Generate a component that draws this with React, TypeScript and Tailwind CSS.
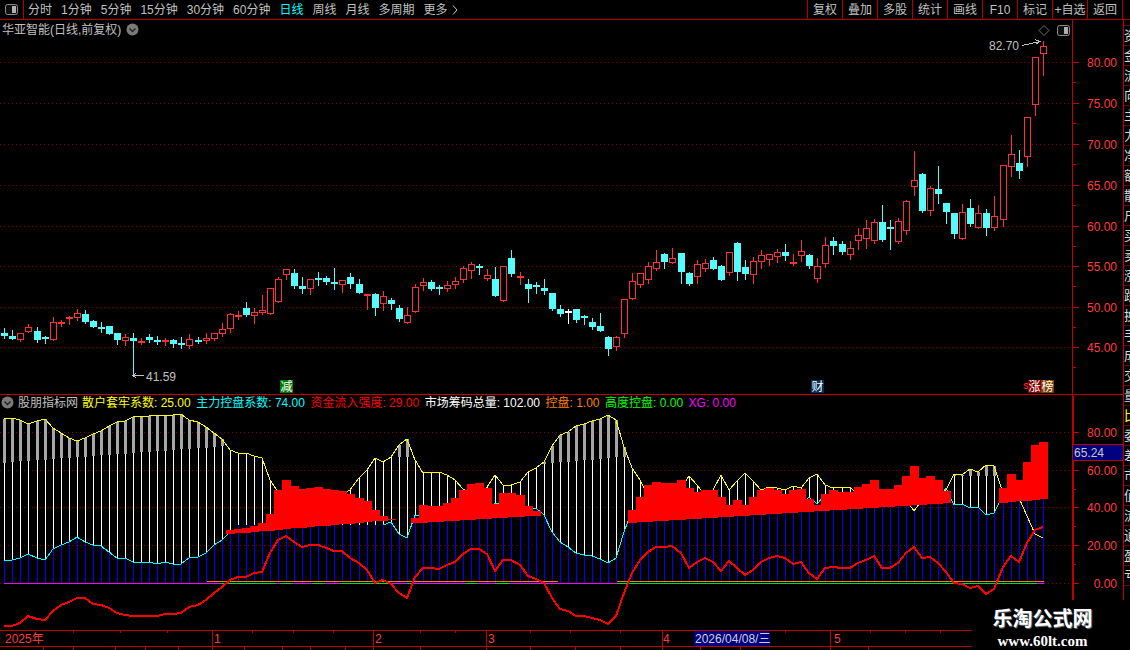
const CANDLES: number[][] = [
  [1,328,333,336,338],[1,330,336,339,339],[0,333,333,340,341],[0,324,327,332,332],[1,327,331,340,342],
  [1,336,337,339,343],[0,317,322,340,340],[0,320,322,323,326],[0,316,317,318,324],[0,309,313,318,320],
  [1,310,314,322,323],[1,320,321,327,327],[1,322,327,327,332],[1,326,326,334,334],[1,333,333,340,344],
  [0,334,337,341,345],[1,333,338,341,375],[0,338,341,343,344],[1,334,337,340,342],[1,336,340,342,344],
  [0,338,340,341,345],[1,339,340,344,347],[1,337,343,345,348],[0,334,339,346,348],[1,337,340,340,343],
  [0,333,338,341,343],[0,333,333,339,340],[0,323,329,334,336],[0,313,314,329,332],[0,311,315,317,319],
  [1,302,308,315,316],[0,308,312,316,323],[0,295,310,313,314],[0,288,288,314,314],[0,277,279,302,302],
  [0,269,269,275,279],[1,269,273,286,288],[1,277,286,289,293],[0,279,279,289,294],[1,272,278,278,285],
  [1,276,278,282,284],[1,268,282,284,289],[0,280,280,285,292],[1,273,277,284,288],[1,279,284,293,293],
  [0,294,294,296,309],[1,293,294,308,315],[0,291,296,304,310],[1,298,300,304,309],[1,305,308,319,321],
  [0,307,315,323,323],[0,284,287,312,312],[0,278,282,286,290],[1,280,282,289,290],[1,285,287,287,294],
  [0,281,285,289,291],[0,277,281,285,288],[0,266,268,280,282],[0,262,264,271,278],[1,264,266,266,274],
  [0,269,275,279,280],[1,267,279,296,296],[0,266,266,301,301],[1,250,258,274,276],[0,272,276,278,284],
  [1,279,284,289,302],[1,282,285,287,293],[1,279,288,291,294],[1,293,293,309,310],[1,305,309,314,316],
  [2,309,311,311,323],[1,309,309,320,322],[1,315,316,316,324],[1,318,322,327,329],[1,313,326,331,331],
  [1,336,337,349,355],[0,336,337,347,350],[0,299,299,334,337],[0,273,281,299,299],[0,273,273,285,287],
  [0,262,266,280,283],[0,250,262,269,270],[1,253,254,262,268],[0,248,258,263,263],[1,253,253,272,283],
  [1,272,273,284,285],[0,260,264,277,283],[0,259,263,269,271],[1,257,260,269,269],[1,265,266,280,280],
  [0,252,252,273,275],[1,242,243,272,280],[1,260,267,274,279],[0,257,261,275,283],[0,250,255,262,268],
  [0,254,254,260,265],[0,249,252,257,262],[1,244,252,256,260],[0,254,262,262,265],[0,240,251,256,261],
  [1,254,255,266,268],[0,258,266,279,282],[0,237,245,264,267],[1,237,241,246,254],[1,241,244,252,254],
  [0,241,248,255,259],[0,228,235,241,249],[0,220,228,239,248],[0,219,222,241,243],[1,205,222,240,241],
  [1,220,227,229,249],[0,218,221,242,243],[0,200,201,231,234],[0,151,180,187,195],[1,173,174,211,212],
  [0,186,188,211,215],[1,166,189,194,203],[1,203,203,212,223],[1,213,213,234,238],[0,204,212,239,239],
  [1,199,208,224,226],[0,205,213,228,228],[1,209,213,228,235],[0,196,216,228,230],[0,165,165,220,226],
  [0,135,154,167,176],[1,150,163,171,178],[0,117,117,157,166],[0,57,57,105,115],[0,41,46,54,75],
];

const YELLOW = [
  419,418,420,424,421,419,428,433,438,441,438,434,431,426,422,421,417,416,416,415,416,415,414,420,422,427,433,439,450,453,453,456,458,480,
  492,494,495,495,495,495,495,495,494,490,478,470,458,462,457,445,439,460,473,472,472,475,480,489,495,495,487,475,485,485,482,472,468,462,
  446,435,432,426,424,421,419,415,420,447,468,480,495,495,495,495,488,476,485,495,490,475,490,481,473,481,490,487,488,490,486,488,478,474,
  485,488,487,487,495,495,490,489,489,495,500,511,500,495,495,490,474,475,469,472,465,466,493,498,498,516,534,538,
];

const CYAN = [
  560,560,558,554,558,560,549,545,542,537,542,545,546,552,558,558,562,562,562,564,562,564,564,558,557,553,545,540,532,
  525,525,525,525,525,525,525,525,525,525,525,525,525,525,525,525,525,525,525,
  522,534,538,515,515,515,515,515,515,515,515,515,515,503,505,510,510,510,508,515,532,542,547,553,555,556,559,563,558,532,510,
  505,505,505,505,505,505,505,505,505,505,505,505,505,505,505,505,505,505,505,505,505,
  497,504,495,500,500,500,500,500,500,500,500,500,500,500,500,500,500,488,505,504,508,507,515,513,495,483,490,470,455,455,
];

const RED_LINE = [
  626,626,623,616,619,620,611,605,602,598,598,604,605,608,613,615,616,616,616,616,614,614,613,607,605,600,593,587,580,577,577,573,572,553,
  540,536,542,547,545,545,548,551,551,558,563,570,583,580,584,593,598,577,568,568,569,565,562,554,549,549,554,571,560,560,565,576,579,583,
  598,609,611,616,616,618,620,624,616,593,573,560,552,547,547,546,553,568,562,558,562,571,561,568,575,570,562,558,556,558,564,562,573,579,
  568,567,568,568,563,560,556,568,568,563,553,547,558,557,563,572,583,584,588,586,594,589,567,556,562,543,530,527,
];

// start index, bottom at start, bottom at end, tops of each bar
const RED_BLOCKS: [number, number, number, number[]][] = [
  [28, 534, 520, [530,529,528,526,523,514,490,480,486,489,488,487,489,490,491,494,498,501,510,516,519]],
  [51, 523, 516, [518,505,506,506,503,498,490,484,483,488,504,493,493,495,506,511]],
  [78, 523, 503, [510,497,485,482,483,483,480,488,492,490,490,497,505,500,505,497,490,488,490,494,490,489,499,505,494,490,492,492,487,484,480,489,489,485,476,466,478,476,480,491]],
  [124, 503, 499, [488,474,480,462,445,442]],
];

const GREEN_BLOBS = [[220,276],[280,293],[312,325],[340,392],[407,413],[465,478],[495,510],[617,1037]];
const PRICE_TICKS = [[62,'80.00'],[103,'75.00'],[144,'70.00'],[185,'65.00'],[226,'60.00'],[266,'55.00'],[307,'50.00'],[347,'45.00']] as const;
const INDEX_TICKS = [[432,'80.00'],[470,'60.00'],[507,'40.00'],[545,'20.00'],[583,'0.00']] as const;
const PERIODS = ['分时','1分钟','5分钟','15分钟','30分钟','60分钟','日线','周线','月线','多周期'];
const TOOLS = ['复权','叠加','多股','统计','画线','F10','标记','+自选','返回'];
const LEGEND = [
  ['散户套牢系数: 25.00','text-[#ffff00]'],
  ['主力控盘系数: 74.00','text-[#00ffff]'],
  ['资金流入强度: 29.00','text-[#ff0000]'],
  ['市场筹码总量: 102.00','text-white'],
  ['控盘: 1.00','text-[#ff7f00]'],
  ['高度控盘: 0.00','text-[#00ff00]'],
  ['XG: 0.00','text-[#ff00ff]'],
];
const SIDE_ROWS = ['资','金','流','向','主','力','净','额','散','户','买','卖','涨','跌','换','手','成','交','量','比','委','差','市','值','流','通','盈','亏'];

const cx = (i: number) => Math.round(4.3 + 8.05 * i);
const pts = (ys: number[]) => ys.map((y, i) => `${cx(i)},${y}`).join(' ');

// grey part of the white bars
function greyBottom(i: number) {
  if (i <= 27) return 462.5 - 0.6 * i;
  if (i >= 48 && i <= 50) return 457;
  if (i >= 67 && i <= 77) return 463 - 0.7 * (i - 68);
  if (i >= 118 && i <= 123) return 475.5;
  return 0;
}

function Dotted({ y, x1 = 0, x2 = 1072 }: { y: number; x1?: number; x2?: number }) {
  return <line x1={x1} x2={x2} y1={y + 0.5} y2={y + 0.5} stroke="#8c0000" strokeDasharray="1 3" />;
}

function ToggleIcon() {
  return (
    <svg width="13" height="11" viewBox="0 0 13 11">
      <rect x="0.5" y="0.5" width="12" height="10" rx="2" fill="#111" stroke="#8c8c8c" />
      <rect x="7" y="2" width="4" height="7" fill="#b0b0b0" />
    </svg>
  );
}

function ChevronDot() {
  return (
    <svg width="13" height="13" viewBox="0 0 13 13">
      <circle cx="6.5" cy="6.5" r="6" fill="#7a7a7a" />
      <path d="M3.5 5.5 L6.5 8.5 L9.5 5.5" fill="none" stroke="#222" strokeWidth="1.4" />
    </svg>
  );
}

function Axis({ ticks, y1, y2, minorEvery }: { ticks: readonly (readonly [number, string])[]; y1: number; y2: number; minorEvery: number }) {
  return (
    <g shapeRendering="crispEdges">
      <rect x="1072" y={y1} width="1" height={y2 - y1} fill="#c00000" />
      {ticks.map(([y, label]) => (
        <g key={label}>
          <rect x="1073" y={y} width="6" height="1" fill="#c00000" />
          <rect x="1073" y={y + minorEvery} width="3" height="1" fill="#c00000" />
          <text x="1117" y={y + 5} fontSize="12" textAnchor="end" fill="#ff3c3c" shapeRendering="auto">{label}</text>
        </g>
      ))}
    </g>
  );
}

function PriceChart() {
  return (
    <svg width="1123" height="374" viewBox="0 20 1123 374" className="block">
      {PRICE_TICKS.map(([y]) => <Dotted key={y} y={y} />)}
      <g shapeRendering="crispEdges">
        {CANDLES.map(([kind, hi, top, bot, lo], i) => {
          const x = cx(i);
          const color = kind === 0 ? '#ff3232' : kind === 1 ? '#54fcfc' : '#ffffff';
          const thin = bot - top <= 2;
          return (
            <g key={i}>
              <rect x={x} y={hi} width="1" height={lo - hi + 1} fill={color} />
              {thin || kind === 1 ? (
                <rect x={x - 3} y={top} width="7" height={Math.max(bot - top, thin ? 2 : 1)} fill={color} />
              ) : (
                <rect x={x - 2.5} y={top + 0.5} width="6" height={bot - top - 1} fill="#000" stroke={color} />
              )}
            </g>
          );
        })}
      </g>
      <Axis ticks={PRICE_TICKS} y1={20} y2={394} minorEvery={20} />
      <text x="989" y="50" fontSize="12" fill="#c0c0c0">82.70</text>
      <path d="M1022 45.5 L1040 41.5 M1035 39.5 L1040 41.5 L1036 44" fill="none" stroke="#c0c0c0" shapeRendering="crispEdges" />
      <text x="146" y="381" fontSize="12" fill="#c0c0c0">41.59</text>
      <path d="M133 375.5 H144 M136 373 L133 375.5 L136 378" fill="none" stroke="#c0c0c0" shapeRendering="crispEdges" />
      <path d="M1044 25.5 L1049 30.5 L1044 35.5 L1039 30.5 Z" fill="none" stroke="#707070" />
    </svg>
  );
}

function IndicatorChart() {
  return (
    <svg width="1123" height="235" viewBox="0 395 1123 235" className="block">
      {INDEX_TICKS.map(([y]) => <Dotted key={y} y={y} />)}
      <g shapeRendering="crispEdges">
        {CYAN.map((top, i) => <rect key={i} x={cx(i)} y={top} width="1" height={583 - top} fill="#0000ff" />)}
        {YELLOW.map((y, i) => {
          if (y >= CYAN[i]) return null;
          const g = greyBottom(i);
          return (
            <g key={i}>
              <rect x={cx(i)} y={y} width="1" height={CYAN[i] - y} fill="#ffffff" />
              {g > y && <rect x={cx(i) - 1} y={y} width="3" height={g - y} fill="#a6a6a6" />}
            </g>
          );
        })}
        <polyline points={pts(CYAN.slice(0, 29))} fill="none" stroke="#00ffff" />
        <polyline points={CYAN.map((y, i) => `${cx(i)},${y}`).slice(47, 79).join(' ')} fill="none" stroke="#00ffff" />
        <polyline points={CYAN.map((y, i) => `${cx(i)},${y}`).slice(99, 128).join(' ')} fill="none" stroke="#00ffff" />
        <polyline points={pts(YELLOW)} fill="none" stroke="#ffff00" />
        {RED_BLOCKS.map(([start, b0, b1, tops]) =>
          tops.map((top, k) => {
            const bot = Math.round(b0 + ((b1 - b0) * k) / (tops.length - 1));
            return <rect key={start + k} x={cx(start + k) - 4} y={top} width="9" height={bot - top} fill="#ff0000" />;
          }),
        )}
        <rect x="207" y="581" width="351" height="1" fill="#ff7f00" />
        <rect x="617" y="581" width="427" height="1" fill="#ff7f00" />
        <rect x="4" y="583" width="1040" height="1" fill="#ff00ff" />
        {GREEN_BLOBS.map(([a, b]) => <rect key={a} x={a} y="583" width={b - a} height="1" fill="#00e000" />)}
        <polyline points={pts(RED_LINE)} fill="none" stroke="#ff0000" strokeWidth="2" />
      </g>
      <Axis ticks={INDEX_TICKS} y1={395} y2={600} minorEvery={19} />
      <rect x="1073" y="396" width="1" height="204" fill="#c00000" shapeRendering="crispEdges" />
    </svg>
  );
}

function TimeAxis() {
  const seps = [212, 373, 486, 662, 830];
  const minor = [73, 120, 167, 252, 293, 333, 420, 455, 530, 570, 620, 700, 735, 785, 870, 905, 940];
  const lower = [43, 73, 115, 145, 178, 212, 244, 282, 310, 345, 373, 420, 486, 530, 575, 620, 662, 700, 740, 830, 868];
  return (
    <svg width="1130" height="20" viewBox="0 630 1130 20" className="block">
      <g shapeRendering="crispEdges">
        <rect x="0" y="630" width="972" height="1" fill="#c00000" />
        <rect x="0" y="646" width="972" height="1" fill="#c00000" />
        {seps.map((x) => <rect key={x} x={x} y="630" width="1" height="16" fill="#c00000" />)}
        {minor.map((x) => <rect key={x} x={x} y="630" width="1" height="3" fill="#c00000" />)}
        {lower.map((x) => <rect key={x} x={x} y="647" width="1" height="3" fill="#c00000" />)}
        <rect x="694" y="631" width="76" height="15" fill="#000080" />
      </g>
      <text x="5" y="643" fontSize="12" fill="#ff3c3c">2025年</text>
      <text x="214" y="643" fontSize="12" fill="#ff3c3c">1</text>
      <text x="375" y="643" fontSize="12" fill="#ff3c3c">2</text>
      <text x="488" y="643" fontSize="12" fill="#ff3c3c">3</text>
      <text x="663" y="643" fontSize="12" fill="#ff3c3c">4</text>
      <text x="834" y="643" fontSize="12" fill="#ff3c3c">5</text>
      <text x="695" y="643" fontSize="12" fill="#d0d0d0">2026/04/08/三</text>
    </svg>
  );
}

export default function App() {
  return (
    <div className="relative w-[1130px] h-[650px] overflow-hidden bg-black text-[12px] leading-none text-[#c0c0c0] font-['Liberation_Sans','Noto_Sans_CJK_SC',sans-serif]">
      {/* top toolbar */}
      <div className="flex h-5 border-b border-[#b00000]">
        <div className="flex w-6 items-center justify-center border-r border-[#b00000]">
          <ToggleIcon />
        </div>
        <div className="flex flex-1 items-center gap-[9px] pl-1">
          {PERIODS.map((p) => (
            <span key={p} className={p === '日线' ? 'text-[#00ffff]' : ''}>{p}</span>
          ))}
          <span className="flex items-center gap-1">
            更多
            <svg width="6" height="10" viewBox="0 0 6 10"><path d="M1 0.5 L5 5 L1 9.5" fill="none" stroke="#c0c0c0" /></svg>
          </span>
        </div>
        <div className="flex border-l border-[#b00000]">
          {TOOLS.map((t) => (
            <div key={t} className="flex w-[35px] items-center justify-center border-r border-[#b00000] whitespace-nowrap">{t}</div>
          ))}
        </div>
        <div className="w-[7px]" />
      </div>

      <div className="flex">
        <div className="w-[1123px]">
          {/* price panel */}
          <div className="relative border-b border-[#c00000]">
            <PriceChart />
            <div className="absolute left-[2px] top-[3px] flex items-center gap-[5px]">
              <span>华亚智能(日线,前复权)</span>
              <ChevronDot />
            </div>
            <div className="absolute left-[1057px] top-[5px] flex"><ToggleIcon /></div>
            <div className="absolute left-[280px] top-[360px] flex h-[13px] w-[13px] items-center justify-center bg-[#007a00] text-white">减</div>
            <div className="absolute left-[811px] top-[360px] flex h-[13px] w-[13px] items-center justify-center bg-[#00305c] text-white">财</div>
            <div className="absolute left-[1023px] top-[360px] flex h-[13px] items-center">
              <span className="w-[5px] text-[9px] font-bold text-[#ff2020]">S</span>
              <span className="flex h-[13px] w-[13px] items-center justify-center bg-[#800000] text-white">涨</span>
              <span className="flex h-[13px] w-[13px] items-center justify-center bg-[#804000] text-white">榜</span>
            </div>
          </div>
          {/* indicator panel */}
          <div className="relative">
            <IndicatorChart />
            <div className="absolute left-[1px] top-[1px] flex items-center whitespace-nowrap">
              <ChevronDot />
              <span className="ml-[4px] mr-[4px]">股朋指标网</span>
              <div className="flex gap-[5.5px]">
                {LEGEND.map(([text, color]) => <span key={text} className={color}>{text}</span>)}
              </div>
            </div>
            <div className="absolute left-[1073px] top-[49px] flex h-[17px] w-[50px] items-center border-y border-[#c00000] bg-[#000080] pl-[1px] text-[#c8c8c8]">65.24</div>
          </div>
        </div>
        {/* cut off side list */}
        <div className="h-[580px] w-[7px] overflow-hidden border-l border-[#c00000]">
          <div className="h-[6px] border-b border-[#7a0000]" />
          {SIDE_ROWS.map((c, i) => (
            <div key={i} className={`flex h-[20px] w-[14px] items-center border-b border-[#7a0000] text-[13px] ${i === 19 ? 'text-[#ffff00]' : 'text-[#d8d8d8]'}`}>{c}</div>
          ))}
        </div>
      </div>

      <div className="absolute left-0 top-[630px]"><TimeAxis /></div>

      {/* watermark */}
      <div className="absolute left-[972px] top-[601px] flex h-[49px] w-[158px] flex-col items-center bg-black pr-[17px] pt-[6px] text-white">
        <span className="text-[20px] font-bold leading-[24px] [text-shadow:1px_1px_1px_#777]">乐淘公式网</span>
        <span className="mt-[3px] font-['Liberation_Serif',serif] text-[15px] font-bold leading-[14px]">www.60lt.com</span>
      </div>
    </div>
  );
}
